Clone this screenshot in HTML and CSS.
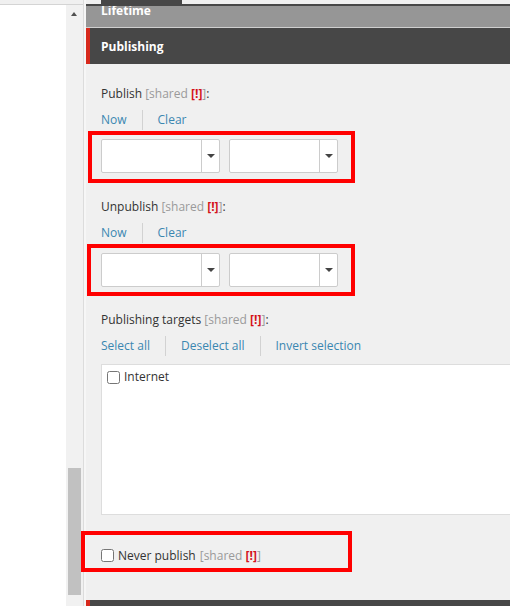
FILE: index.html
```html
<!DOCTYPE html>
<html>
<head>
<meta charset="utf-8">
<link rel="stylesheet" href="styles.css">
</head>
<body>
<div class="app">
  <aside class="tree"></aside>
  <div class="scrollbar">
    <div class="scroll-up"></div>
    <div class="scroll-track"><div class="scroll-thumb"></div></div>
  </div>
  <div class="divider"></div>
  <main class="editor">
    <div class="topstrip"><div class="toptab"></div></div>
    <div class="section-bar section-bar--collapsed"><span class="bar-title">Lifetime</span></div>
    <div class="section-bar section-bar--active"><span>Publishing</span></div>
    <div class="section-body">
      <div class="field-label">Publish <span class="shared">[shared <b class="warn">[!]</b>]</span>:</div>
      <div class="links"><a>Now</a><span class="sep"></span><a>Clear</a></div>
      <div class="mark mark--one">
        <div class="combo combo--date"><div class="combo-input"></div><div class="combo-btn"><i class="caret"></i></div></div>
        <div class="combo combo--time"><div class="combo-input"></div><div class="combo-btn"><i class="caret"></i></div></div>
      </div>

      <div class="field-label field-label--spaced">Unpublish <span class="shared">[shared <b class="warn">[!]</b>]</span>:</div>
      <div class="links"><a>Now</a><span class="sep"></span><a>Clear</a></div>
      <div class="mark mark--two">
        <div class="combo combo--date"><div class="combo-input"></div><div class="combo-btn"><i class="caret"></i></div></div>
        <div class="combo combo--time"><div class="combo-input"></div><div class="combo-btn"><i class="caret"></i></div></div>
      </div>

      <div class="field-label field-label--spaced">Publishing targets <span class="shared">[shared <b class="warn">[!]</b>]</span>:</div>
      <div class="links"><a>Select all</a><span class="sep"></span><a>Deselect all</a><span class="sep"></span><a>Invert selection</a></div>
      <div class="listbox">
        <label class="check-row"><input type="checkbox"> Internet</label>
      </div>

      <div class="mark mark--three">
        <label class="check-row"><input type="checkbox"> Never publish <span class="shared">[shared <b class="warn">[!]</b>]</span></label>
      </div>
    </div>
    <div class="section-bar section-bar--next"></div>
  </main>
</div>
</body>
</html>
```

FILE: styles.css
```css
html, body {
  margin: 0;
  padding: 0;
  overflow: hidden;
  width: 510px;
  height: 606px;
  background: #f0f0f0;
  font-family: "Open Sans", "Noto Sans", sans-serif;
  font-size: 12px;
  color: #333;
}

.app {
  display: flex;
  height: 606px;
}

.tree {
  width: 66px;
  flex: none;
  background: #fff;
  border-top: 1px solid #d4d4d4;
  margin-top: 4px;
  box-sizing: border-box;
}

.scrollbar {
  width: 17px;
  flex: none;
  display: flex;
  flex-direction: column;
  background: #f1f1f1;
  border-top: 1px solid #d4d4d4;
  margin-top: 4px;
}

.scroll-up {
  height: 17px;
  position: relative;
}
.scroll-up::after {
  content: "";
  position: absolute;
  left: 5px;
  top: 7px;
  border-left: 3.5px solid transparent;
  border-right: 3.5px solid transparent;
  border-bottom: 4px solid #505050;
}

.scroll-track {
  flex: 1;
  display: flex;
  flex-direction: column;
  justify-content: flex-end;
  padding: 0 2px 11px 2px;
}

.scroll-thumb {
  height: 127px;
  background: #c1c1c1;
}

.divider {
  width: 3px;
  flex: none;
  background: #f6f6f6;
  border-left: 1px solid #dcdcdc;
  box-sizing: border-box;
}

.editor {
  flex: 1;
  min-width: 0;
  display: flex;
  flex-direction: column;
  background: #f0f0f0;
}

.topstrip {
  height: 4px;
  flex: none;
  display: flex;
  border-bottom: 2px solid #474747;
}

.toptab {
  width: 81px;
  margin-left: 15px;
  background: #474747;
}

.section-bar {
  flex: none;
  display: flex;
  align-items: center;
  color: #fff;
  font-weight: 700;
  font-size: 12px;
  padding-left: 15px;
  box-sizing: border-box;
}

.section-bar--collapsed {
  height: 22px;
  background: #969696;
  border-bottom: 1px solid #cfcfcf;
  align-items: flex-start;
  overflow: hidden;
}
.section-bar--collapsed .bar-title {
  margin-top: -4px;
  line-height: 18px;
}

.section-bar--active {
  height: 36px;
  background: #474747;
  border-left: 4px solid #d7291c;
  padding-left: 11px;
}

.section-bar--next {
  height: 6px;
  margin-top: auto;
  background: #474747;
  border-left: 4px solid #d7291c;
}

.section-body {
  padding: 21px 0 0 15px;
  display: flex;
  flex-direction: column;
  align-items: flex-start;
}

.field-label {
  line-height: 18px;
  color: #333;
}
.field-label--spaced {
  margin-top: 15px;
}

.shared {
  color: #9a9a9a;
}
.warn {
  color: #d4121a;
  font-weight: 700;
}

.links {
  display: flex;
  align-items: center;
  height: 20px;
  margin-top: 7px;
  line-height: 20px;
}
.links a {
  color: #3a87b1;
  cursor: pointer;
}
.sep {
  width: 1px;
  height: 20px;
  background: #d2d2d2;
  margin: 0 15px;
}

.mark {
  border: 4px solid #ff0000;
  box-sizing: border-box;
  display: flex;
  margin-top: 1px;
}

.mark--one {
  margin-left: -13px;
  width: 267px;
  height: 52px;
  padding: 4px 0 0 9px;
  gap: 9px;
}

.mark--two {
  margin-left: -14px;
  width: 268px;
  height: 52px;
  padding: 5px 0 0 10px;
  gap: 9px;
}

.mark--three {
  margin-left: -20px;
  margin-top: 16px;
  width: 271px;
  height: 41px;
  padding: 8px 0 0 16px;
}

.combo {
  display: flex;
  height: 34px;
  border: 1px solid #cccccc;
  border-radius: 2px;
  background: #fff;
  box-sizing: border-box;
}
.combo--date { width: 119px; }
.combo--time { width: 109px; }

.combo-input {
  flex: 1;
}
.combo-btn {
  width: 17px;
  border-left: 1px solid #cccccc;
  display: flex;
  align-items: center;
  justify-content: center;
}
.caret {
  display: block;
  width: 0;
  height: 0;
  border-left: 4px solid transparent;
  border-right: 4px solid transparent;
  border-top: 4px solid #444;
}

.listbox {
  margin-top: 8px;
  width: 430px;
  height: 151px;
  background: #fff;
  border: 1px solid #dddddd;
  box-sizing: border-box;
  padding: 3px 0 0 5px;
}

.check-row {
  display: flex;
  align-items: center;
  gap: 4px;
  line-height: 18px;
  color: #333;
}
.check-row input {
  margin: 0;
  width: 13px;
  height: 13px;
}
```
